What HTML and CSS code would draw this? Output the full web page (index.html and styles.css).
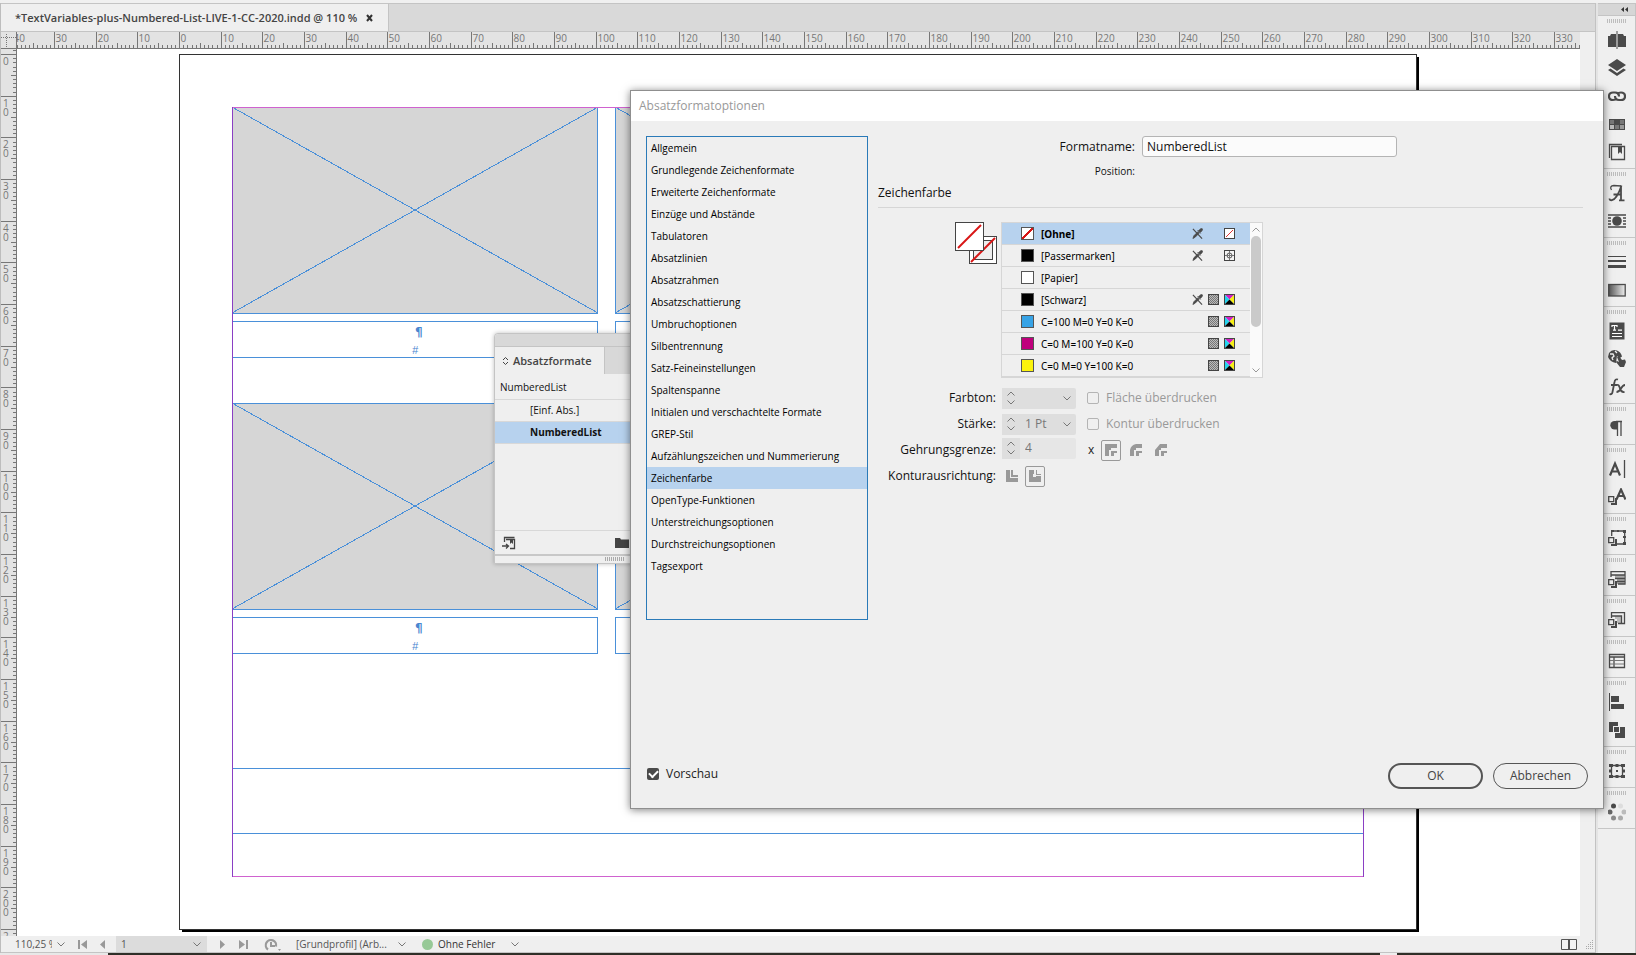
FILE: index.html
```
<!DOCTYPE html>
<html lang="de">
<head>
<meta charset="utf-8">
<title>Absatzformatoptionen</title>
<link rel="stylesheet" href="styles.css">
</head>
<body>
<svg class="defs" aria-hidden="true">
  <symbol id="chev" viewBox="0 0 8 5"><path d="M.5 .5 4 4 7.5 .5" fill="none" stroke="currentColor"/></symbol>
  <symbol id="chev-up" viewBox="0 0 8 5"><path d="M.5 4.5 4 1 7.5 4.5" fill="none" stroke="currentColor"/></symbol>
  <symbol id="pen" viewBox="0 0 12 12"><path d="M1 11.500 2 8.500 6.500 4 8 5.500 3.500 10zM7 3 8.500 1.500Q10 0 11.300 .900 12 2 10.500 3.500L9 5zM6 2.500 9.500 6" fill="#4a4a4a" stroke="#4a4a4a" stroke-width=".8"/><path d="M1 1 11 11.500" stroke="#4a4a4a" stroke-width="1.300"/></symbol>
  <symbol id="tint" viewBox="0 0 11 11"><rect x=".5" y=".5" width="10" height="10" fill="#bbb" stroke="#444"/><path d="M1 1.500h9M1 3.500h9M1 5.500h9M1 7.500h9M1 9.500h9" stroke="#777" stroke-dasharray="1 1"/><path d="M2 2.500h8M2 4.500h8M2 6.500h8M2 8.500h8" stroke="#777" stroke-dasharray="1 1"/></symbol>
  <symbol id="cmyk" viewBox="0 0 11 11"><path fill="#d21fc4" d="M0 0h11L5.500 5.500z"/><path fill="#22d3ee" d="M0 0 5.500 5.500 0 11z"/><path fill="#f7ee14" d="M11 0v11L5.500 5.500z"/><path d="M0 11 5.500 5.500 11 11z"/><rect x=".5" y=".5" width="10" height="10" fill="none" stroke="#444"/></symbol>
  <symbol id="none" viewBox="0 0 11 11"><rect x=".5" y=".5" width="10" height="10" fill="#fff" stroke="#444"/><path d="M2 9 9 2" stroke="#d33"/></symbol>
  <symbol id="reg" viewBox="0 0 11 11"><rect x=".5" y=".5" width="10" height="10" fill="#f4f4f4" stroke="#444"/><circle cx="5.500" cy="5.500" r="2.500" fill="none" stroke="#555"/><path d="M5.500 1v9M1 5.500h9" stroke="#777"/></symbol>
</svg>

<div class="top-strip"></div>
<div class="app">
  <main class="document">
    <div class="tabs">
      <div class="tab"><span>*TextVariables-plus-Numbered-List-LIVE-1-CC-2020.indd @ 110 %</span>
        <button class="tab-close" aria-label="Schließen"><svg width="7" height="8" viewBox="0 0 7 8"><path d="M1 1 6 7M6 1 1 7" stroke="#333" stroke-width="2"/></svg></button>
      </div>
    </div>
    <div class="workspace">
      <svg class="corner" width="16" height="17"><path d="M0 5.500h16M5.500 2v15" stroke="#777" stroke-dasharray="1 1"/></svg>
      <svg class="ruler-h" id="ruler-h"></svg>
      <div class="scroll-col"></div>
      <svg class="ruler-v" id="ruler-v"></svg>
      <div class="canvas">
        <svg class="page">
          <g transform="translate(-17 -49)" shape-rendering="crispEdges" fill="none">
            <rect x="182" y="57" width="1237" height="875" fill="#000"/>
            <rect x="179.500" y="54.500" width="1237" height="875" fill="#fff" stroke="#333"/>
            <g stroke="#4a90d9">
              <rect x="232.500" y="107.500" width="365" height="206" fill="#d6d6d6"/>
              <rect x="615.500" y="107.500" width="365" height="206" fill="#d6d6d6"/>
              <rect x="232.500" y="403.500" width="365" height="206" fill="#d6d6d6"/>
              <rect x="615.500" y="403.500" width="365" height="206" fill="#d6d6d6"/>
              <path d="M232 107 598 313M232 313 598 107M615 107 981 313M615 313 981 107M232 403 598 609M232 609 598 403M615 403 981 609M615 609 981 403"/>
              <rect x="232.500" y="321.500" width="365" height="36"/>
              <rect x="615.500" y="321.500" width="365" height="36"/>
              <rect x="232.500" y="617.500" width="365" height="36"/>
              <rect x="615.500" y="617.500" width="365" height="36"/>
              <path d="M232 768.500H1363M232 833.500H1363"/>
            </g>
            <path d="M232 107.500H1364M232 876.500H1364" stroke="#cf62cf"/>
            <path d="M232.500 107V877M1363.500 107V877" stroke="#8a3fc4"/>
          </g>
          <g transform="translate(-17 -49)" class="marks">
            <text x="415" y="336">¶</text><text x="412" y="354" class="hash">#</text>
            <text x="415" y="632">¶</text><text x="412" y="650" class="hash">#</text>
          </g>
        </svg>
      </div>
    </div>
    <footer class="status">
      <span class="zoom">110,25 %</span>
      <svg class="chev c1" width="8" height="5"><use href="#chev"/></svg>
      <button class="nav n1" aria-label="Erste Seite"><svg width="9" height="9"><path d="M0 0h2v9H0zM9 0v9L3 4.500z"/></svg></button>
      <button class="nav n2" aria-label="Vorherige Seite"><svg width="5" height="9"><path d="M5 0v9L0 4.500z"/></svg></button>
      <label class="page-no"><select aria-label="Seite"><option>1</option></select><svg class="chev" width="8" height="5"><use href="#chev"/></svg></label>
      <button class="nav n3" aria-label="Nächste Seite"><svg width="5" height="9"><path d="M0 0v9l5-4.500z"/></svg></button>
      <button class="nav n4" aria-label="Letzte Seite"><svg width="9" height="9"><path d="M7 0h2v9H7zM0 0v9l6-4.500z"/></svg></button>
      <button class="nav n5" aria-label="Öffnen"><svg width="17" height="13"><path d="M4 11.500A5.200 5.200 0 1 1 12 8.500" fill="none" stroke="#999" stroke-width="2.200"/><path d="M6 4h2v3h3v2H6zM14 11h3l-1.500 2z"/></svg></button>
      <span class="profile">[Grundprofil] (Arb...</span>
      <svg class="chev" width="8" height="5"><use href="#chev"/></svg>
      <span class="dot"></span>
      <span class="errors">Ohne Fehler</span>
      <svg class="chev" width="8" height="5"><use href="#chev"/></svg>
      <svg class="spread" width="16" height="11"><path d="M.5 .5h15v10H.5zM7.500 0v11M8.500 0v11" fill="#f4f4f4" stroke="#555"/></svg>
      <svg class="resize" width="9" height="9"><path d="M8.500 0v9M6.500 2v7M4.500 4v5M2.500 6v3" stroke="#aaa" stroke-dasharray="1 1"/></svg>
    </footer>
  </main>

  <aside class="dock">
    <button class="collapse" aria-label="Bedienfelder erweitern"><svg width="8" height="5"><path d="M3 0v5L0 2.500zM7 0v5L4 2.500z"/></svg></button>
    <div class="group">
      <button aria-label="Seiten"><svg viewBox="0 0 18 18"><path d="M0 5h2l1-2h5v13H0zM18 5h-2l-1-2h-5v13h8z"/><path d="M9 0v18" stroke="#4a4a4a"/></svg></button>
      <button aria-label="Ebenen"><svg viewBox="0 0 18 18"><path d="M9 0 18 6 9 12 0 6zM0 11l2.500-1.500L9 14l6.500-4.500L18 11 9 17z"/></svg></button>
      <button aria-label="Verknüpfungen"><svg viewBox="0 0 18 18"><g class="ln thick"><path d="M9 11.500Q7.500 13 5 13 1 13 1 9.200 1 5.500 5 5.500h2q4 0 4 4"/><path d="M9 7Q10.500 5.500 13 5.500q4 0 4 3.700Q17 13 13 13h-2q-4 0-4-4"/></g></svg></button>
      <button aria-label="Farbfelder"><svg viewBox="0 0 18 18"><path d="M1 4h16v11H1z"/><path fill="#777" d="M2 5h4v4H2zM12 5h4v4h-4zM7 10h4v4H7z"/><path fill="#bbb" d="M2 10h4v4H2z"/><path fill="#999" d="M12 10h4v4h-4z"/></svg></button>
      <button aria-label="Bibliothek"><svg viewBox="0 0 18 18"><path class="ln" d="M14 1.500H1.500V15M3.500 3.500h13v13h-13z"/><path d="M10 4h4v7l-2-2-2 2z"/></svg></button>
    </div>
    <div class="group">
      <button aria-label="Glyphen"><svg viewBox="0 0 18 18"><path class="ln" d="M3.500 6Q1 2 6 1.500q3 0 7 .5"/><path class="ln mid" d="M13.500 1.500Q9 15 4 16.200q-2.500 .3-2.500-1.700M13 1.500V16M5.500 10.500H13M11 16.300h5.500"/></svg></button>
      <button aria-label="Textumfluss"><svg viewBox="0 0 18 18"><path class="ln" d="M0 3h18M0 6h3M15 6h3M0 9h3M15 9h3M0 12h3M15 12h3M0 15h18"/><circle cx="9" cy="9" r="4.800"/></svg></button>
    </div>
    <div class="group">
      <button aria-label="Kontur"><svg viewBox="0 0 18 18"><path d="M0 3h18v1H0zM0 7h18v2H0zM0 12h18v3H0z"/></svg></button>
      <button aria-label="Verlauf"><svg viewBox="0 0 18 18"><defs><linearGradient id="g"><stop stop-color="#555"/><stop offset="1" stop-color="#eee"/></linearGradient></defs><rect x=".7" y="3.500" width="16.500" height="11.500" fill="url(#g)" stroke="#4a4a4a" stroke-width="1.300"/></svg></button>
    </div>
    <div class="group">
      <button aria-label="Artikel"><svg viewBox="0 0 18 18"><path d="M1.500 0.500h15v17h-15z"/><path d="M4 5V3.500h5V5M6.500 3.500V8M5 8.200h3M10 8.200h4M4 11.500h10M4 14.500h10" fill="none" stroke="#fff" stroke-width="1.200"/></svg></button>
      <button aria-label="Hyperlinks"><svg viewBox="0 0 18 18"><path d="M1 3Q4-1 9 .5q4 1.500 5 6L12 8 9 6 8 13Q2 12 0 7zM9 7l2-1 3 4 3-.5 1 2.500-2 5h-4l-4-5 1-1 2 1z"/><path d="M2 4l3 0 1 2-2 2 1 2M7 1l2 2" fill="none" stroke="#efefef" stroke-width="1.300"/></svg></button>
      <button aria-label="Effekte"><svg viewBox="0 0 18 18"><path class="ln mid" d="M10 1.500Q7 .5 6.500 4L4.500 14Q4 17 1.500 16M3 7h6M9 7q2-.5 3 3.500t4.500 3.500M17 7q-2 0-4 3.500T8.500 14"/></svg></button>
    </div>
    <div class="group">
      <button aria-label="Absatz"><svg viewBox="0 0 18 18"><path d="M9 2H6.500a4.200 4.200 0 0 0 0 8.400H9z"/><path class="ln" d="M8 2.500h6M9.500 2v15M13 2v15"/></svg></button>
    </div>
    <div class="group">
      <button aria-label="Zeichen"><svg viewBox="0 0 18 18"><path class="ln thick" d="M2 15.500 7 3.500l5 12M4 11.500h6"/><path class="ln" d="M16.500 0v18"/></svg></button>
      <button aria-label="Zeichenformate"><svg viewBox="0 0 18 18"><path class="ln thick" d="M8.500 11.500 13 1.500l4.500 10M10 8h6"/><path class="ln" d="M.7 8.700h5v5h-5z"/><path d="M7 10h2v7H3v-2h4z"/></svg></button>
    </div>
    <div class="group">
      <button aria-label="Objektformate"><svg viewBox="0 0 18 18"><path class="ln" d="M3.700 7V2h13v13H9"/><path d="M3 1h3v2H3zM9 1h2v2H9zM15 1h3v3h-3zM15 7h3v2h-3zM15 13h3v3h-3z"/><path class="ln" d="M.7 8.700h5v5h-5z"/><path d="M7 10h2v7H3v-2h4z"/></svg></button>
    </div>
    <div class="group">
      <button aria-label="Zellenformate"><svg viewBox="0 0 18 18"><path d="M7 5h9v9H9V9H7z" fill="#aaa"/><path class="ln" d="M3 7V1.700h14V5H3M7 8.500h10M9 11.500h8M17 5v9h-7"/><path class="ln" d="M.7 9.700h5v5h-5z"/><path d="M7 11h2v7H3v-2h4z"/></svg></button>
    </div>
    <div class="group">
      <button aria-label="Tabellenformate"><svg viewBox="0 0 18 18"><path d="M7 5h7v7H9V8H7z" fill="#bbb"/><path class="ln" d="M3.500 7V1.700h13V12.500H10M3.500 5h10v7"/><path class="ln" d="M.7 8.700h5v5h-5z"/><path d="M7 10h2v7H3v-2h4z"/></svg></button>
    </div>
    <div class="group">
      <button aria-label="Tabelle"><svg viewBox="0 0 18 18"><path class="ln" d="M1.500 2.500h15v13h-15zM1 5h16M6 5v11"/><path d="M2 8.500h14M2 12h14" stroke="#777"/></svg></button>
    </div>
    <div class="group">
      <button aria-label="Ausrichten"><svg viewBox="0 0 18 18"><path d="M1 0h1v18H1zM3 3h8v6H3zM3 11h13v5H3z"/></svg></button>
      <button aria-label="Pathfinder"><svg viewBox="0 0 18 18"><path d="M1 1h9v4H5v6H1zM12 6h5v11H7v-5h5zM6 6h5v5H6z"/></svg></button>
    </div>
    <div class="group">
      <button aria-label="Transformieren"><svg viewBox="0 0 18 18"><path class="ln" d="M3.500 3.500h11v11h-11z"/><path d="M1 2h4v3H1zM7.500 2h3v3h-3zM13 2h4v3h-4zM1 7.500h3v3H1zM14 7.500h3v3h-3zM1 13h4v3H1zM7.500 13h3v3h-3zM13 13h4v3h-4zM8 8h2v2H8z"/></svg></button>
    </div>
    <div class="group">
      <button aria-label="Farbe"><svg viewBox="0 0 18 18"><circle cx="5.500" cy="3" r="2.500"/><circle cx="12.500" cy="3" r="2.500" fill="#ddd"/><circle cx="16" cy="9" r="2.500" fill="#bbb"/><circle cx="12.500" cy="15" r="2.500" fill="#aaa"/><circle cx="5.500" cy="15" r="2.500" fill="#8a8a8a"/><circle cx="2" cy="9" r="2.500" fill="#666"/></svg></button>
    </div>
  </aside>
</div>
<div class="taskbar"><span></span></div>

<section class="styles-panel" aria-label="Absatzformate">
  <div class="panel-head"></div>
  <div class="panel-tabs"><div class="panel-tab"><svg width="7" height="10"><path d="M1 4 3.500 1.500 6 4M1 6 3.500 8.500 6 6" fill="none" stroke="#444"/></svg>Absatzformate</div></div>
  <div class="current">NumberedList</div>
  <ul class="style-list">
    <li>[Einf. Abs.]</li>
    <li class="selected">NumberedList</li>
  </ul>
  <div class="panel-foot">
    <svg width="14" height="14"><path d="M2.500 6V1.500h10M4 3.500h8.500v9H8M0 10h6M4 8l2.500 2L4 12.500" fill="none" stroke="#444" stroke-width="1.300"/><path d="M8 3h3v5L9.500 6.500 8 8z" fill="#444"/></svg>
    <svg width="14" height="11"><path d="M0 1h5l1 1.500h8V11H0z" fill="#444"/></svg>
  </div>
  <div class="panel-grip"></div>
</section>

<section class="dialog" role="dialog" aria-labelledby="dlg-title">
  <h1 class="dialog-title" id="dlg-title">Absatzformatoptionen</h1>
  <div class="dialog-body">
    <nav class="categories">
      <button>Allgemein</button>
      <button>Grundlegende Zeichenformate</button>
      <button>Erweiterte Zeichenformate</button>
      <button>Einzüge und Abstände</button>
      <button>Tabulatoren</button>
      <button>Absatzlinien</button>
      <button>Absatzrahmen</button>
      <button>Absatzschattierung</button>
      <button>Umbruchoptionen</button>
      <button>Silbentrennung</button>
      <button>Satz-Feineinstellungen</button>
      <button>Spaltenspanne</button>
      <button>Initialen und verschachtelte Formate</button>
      <button>GREP-Stil</button>
      <button>Aufzählungszeichen und Nummerierung</button>
      <button class="selected">Zeichenfarbe</button>
      <button>OpenType-Funktionen</button>
      <button>Unterstreichungsoptionen</button>
      <button>Durchstreichungsoptionen</button>
      <button>Tagsexport</button>
    </nav>
    <div class="options">
      <div class="name-row"><label for="fname">Formatname:</label><input id="fname" value="NumberedList"></div>
      <div class="position">Position:</div>
      <h2>Zeichenfarbe</h2>
      <div class="colour">
        <svg class="fill-stroke" width="43" height="44"><rect x="14.500" y="14.500" width="27" height="27" fill="#fff" stroke="#444"/><rect x="18.500" y="18.500" width="19" height="19" fill="#eee" stroke="#444"/><path d="M16 40 40 16" stroke="#d81616" stroke-width="2"/><rect x=".5" y=".5" width="28" height="28" fill="#fff" stroke="#444"/><path d="M3 26 26 3" stroke="#d81616" stroke-width="2"/></svg>
        <div class="swatches">
          <ul>
            <li class="selected"><span class="chip none"></span><b>[Ohne]</b><svg><use href="#pen"/></svg><i></i><svg><use href="#none"/></svg></li>
            <li><span class="chip black"></span><b>[Passermarken]</b><svg><use href="#pen"/></svg><i></i><svg><use href="#reg"/></svg></li>
            <li><span class="chip paper"></span><b>[Papier]</b></li>
            <li><span class="chip black"></span><b>[Schwarz]</b><svg><use href="#pen"/></svg><svg><use href="#tint"/></svg><svg><use href="#cmyk"/></svg></li>
            <li><span class="chip cyan"></span><b>C=100 M=0 Y=0 K=0</b><svg><use href="#tint"/></svg><svg><use href="#cmyk"/></svg></li>
            <li><span class="chip magenta"></span><b>C=0 M=100 Y=0 K=0</b><svg><use href="#tint"/></svg><svg><use href="#cmyk"/></svg></li>
            <li><span class="chip yellow"></span><b>C=0 M=0 Y=100 K=0</b><svg><use href="#tint"/></svg><svg><use href="#cmyk"/></svg></li>
          </ul>
          <div class="scrollbar"><svg width="8" height="5"><use href="#chev-up"/></svg><span class="thumb"></span><svg width="8" height="5"><use href="#chev"/></svg></div>
        </div>
      </div>
      <div class="form">
        <label for="tint-f">Farbton:</label>
        <div class="cell">
          <div class="field"><span class="spin"><svg><use href="#chev-up"/></svg><svg><use href="#chev"/></svg></span><select id="tint-f" disabled><option></option></select><svg class="drop"><use href="#chev"/></svg></div>
          <label class="check"><input type="checkbox" disabled>Fläche überdrucken</label>
        </div>
        <label for="weight">Stärke:</label>
        <div class="cell">
          <div class="field"><span class="spin"><svg><use href="#chev-up"/></svg><svg><use href="#chev"/></svg></span><select id="weight" disabled><option>1 Pt</option></select><svg class="drop"><use href="#chev"/></svg></div>
          <label class="check"><input type="checkbox" disabled>Kontur überdrucken</label>
        </div>
        <label for="miter">Gehrungsgrenze:</label>
        <div class="cell miter">
          <div class="field plain"><span class="spin"><svg><use href="#chev-up"/></svg><svg><use href="#chev"/></svg></span><input id="miter" value="4" disabled></div>
          <span class="times">x</span>
          <button class="tool on" aria-label="Gehrungsecke"><svg width="12" height="12"><path d="M0 0h12v4H6v2H4v6H0z"/><path d="M6 7h6v2H9v3H6z"/></svg></button>
          <button class="tool" aria-label="Abgerundete Ecke"><svg width="12" height="12"><path d="M0 12V6Q1 1 6 0h6v4H6v2H4v6z"/><path d="M6 7h6v2H9v3H6z"/></svg></button>
          <button class="tool" aria-label="Abgeflachte Ecke"><svg width="12" height="12"><path d="M0 12V6L5 0h7v4H6v2H4v6z"/><path d="M6 7h6v2H9v3H6z"/></svg></button>
        </div>
        <span>Konturausrichtung:</span>
        <div class="cell tight">
          <button class="tool" aria-label="Kontur mittig"><svg width="12" height="12"><path d="M0 0h4v8h8v4H0zM5 0h2v5h5v2H5z"/></svg></button>
          <button class="tool on" aria-label="Kontur außen"><svg width="12" height="12"><path d="M0 0h5v4H4v3h3V6h5v6H0zM7 0h1v4h4v1H7z"/></svg></button>
        </div>
      </div>
    </div>
  </div>
  <div class="dialog-foot">
    <label class="preview"><input type="checkbox" checked>Vorschau</label>
    <button class="pill primary">OK</button>
    <button class="pill">Abbrechen</button>
  </div>
</section>
<script src="rulers.js"></script>
</body>
</html>
```
FILE: styles.css
```
* { box-sizing: border-box; }
body { margin: 0; height: 100vh; display: flex; flex-direction: column; overflow: hidden; background: #efefef; color: #111; font: 12px/16px "Open Sans", "Noto Sans", sans-serif; }
button, input, select { font: inherit; color: inherit; margin: 0; padding: 0; border: 0; background: none; border-radius: 0; appearance: none; }
select:disabled, input:disabled { opacity: 1; }
ul { margin: 0; padding: 0; list-style: none; }
.defs { position: absolute; width: 0; height: 0; }
svg { display: block; flex: none; }

.top-strip { flex: none; height: 3px; background: #f0f0f0; }
.app { flex: 1; min-height: 0; display: flex; }
.document { flex: 1; min-width: 0; display: flex; flex-direction: column; border-left: 1px solid #bdbdbd; border-right: 1px solid #c2c2c2; }
.tabs { flex: none; height: 29px; display: flex; background: #d9d9d9; border-top: 1px solid #c4c4c4; border-bottom: 1px solid #c4c4c4; }
.tab { display: flex; align-items: center; gap: 9px; padding: 0 15px 0 14px; background: #efefef; border-right: 1px solid #c4c4c4; font-size: 11px; font-weight: 600; color: #444; white-space: nowrap; }
.workspace { flex: 1; min-height: 0; display: grid; grid-template: 17px minmax(0, 1fr) / 16px minmax(0, 1fr) 15px; }
.corner { background: #e3e3e3; border-right: 1px solid #777; border-bottom: 1px solid #777; }
.ruler-h, .ruler-v { width: 100%; height: 100%; background: #e3e3e3; fill: #777; font-size: 10px; }
.ruler-h { border-bottom: 1px solid #777; }
.ruler-v { border-right: 1px solid #777; }
.ruler-h path, .ruler-v path { stroke: #777; shape-rendering: crispEdges; }
.scroll-col { grid-column: 3; grid-row: 1 / 3; background: #efefef; }
.canvas { background: #fff; overflow: hidden; }
.page { width: 100%; height: 100%; }
.marks { fill: #4a86d0; font: 700 12px "DejaVu Sans", sans-serif; }
.marks .hash { font: italic 11px "Liberation Sans", sans-serif; }

.status { flex: none; height: 17px; display: flex; align-items: center; background: #efefef; border-bottom: 1px solid #c4c4c4; font-size: 10px; color: #555; padding: 0 2px 0 14px; white-space: nowrap; }
.zoom { width: 37px; overflow: hidden; }
.chev { color: #777; }
.c1 { margin-left: 5px; }
.nav { fill: #999; }
.n1 { margin-left: 13px; }
.n2 { margin-left: 13px; }
.page-no { width: 91px; height: 16px; margin-left: 11px; padding: 0 6px 0 5px; display: flex; align-items: center; background: #dcdcdc; }
.page-no select { flex: 1; }
.n3 { margin-left: 13px; }
.n4 { margin-left: 14px; }
.n5 { margin: 0 15px 0 16px; }
.profile { width: 102px; }
.dot { width: 11px; height: 11px; margin: 0 5px 0 16px; border-radius: 50%; background: #97c997; }
.errors { width: 73px; color: #333; }
.spread { margin-left: auto; }
.resize { margin-left: 7px; }

.dock { flex: none; width: 40px; display: flex; flex-direction: column; border-left: 2px solid #e4e4e4; border-right: 1px solid #c4c4c4; background: #efefef; }
.collapse { height: 13px; display: flex; justify-content: flex-end; align-items: center; padding-right: 6px; background: #d6d6d6; border-top: 1px solid #c4c4c4; border-bottom: 1px solid #c4c4c4; fill: #333; }
.group { display: flex; flex-direction: column; padding: 10px 0 2px; border-bottom: 1px solid #c6c6c6; background: repeating-linear-gradient(90deg, #bdbdbd 0 1px, transparent 1px 2px) 9px 3px / 19px 4px no-repeat; }
.group button { height: 28px; display: grid; place-items: center; fill: #4a4a4a; }
.group svg { width: 18px; height: 18px; }
.ln { fill: none; stroke: #4a4a4a; stroke-width: 1.3; }
.ln.mid { stroke-width: 1.8; }
.ln.thick { stroke-width: 2.2; }
.taskbar { flex: none; height: 2px; background: #2f2f28; display: flex; }
.taskbar::before { content: ""; width: 108px; background: #e8e8e8; }
.taskbar span { width: 17px; margin-left: auto; margin-right: 239px; background: #eee; }

.styles-panel { position: absolute; left: 494px; top: 333px; width: 200px; background: #efefef; border: 1px solid #c4c4c4; border-radius: 4px 0 0 0; box-shadow: 0 0 4px rgba(0,0,0,.25); font-size: 10px; }
.panel-head { height: 13px; background: #d8d8d8; border-radius: 4px 0 0 0; border-bottom: 1px solid #c4c4c4; }
.panel-tabs { height: 27px; background: #d8d8d8; display: flex; }
.panel-tab { display: flex; align-items: center; gap: 4px; padding: 0 13px 0 7px; background: #efefef; font-weight: 600; font-size: 11px; color: #444; border-right: 1px solid #c4c4c4; }
.current { height: 25px; padding-left: 5px; line-height: 26px; }
.style-list { height: 132px; border-top: 1px solid #d8d8d8; border-bottom: 1px solid #d8d8d8; }
.style-list li { height: 22px; padding-left: 35px; line-height: 21px; border-bottom: 1px solid #d8d8d8; }
.style-list .selected { background: #b7d2ee; font-weight: 700; }
.panel-foot { height: 25px; display: flex; align-items: center; gap: 99px; padding-left: 7px; border-bottom: 2px solid #c8c8c8; }
.panel-grip { height: 7px; background: repeating-linear-gradient(90deg, #aaa 0 1px, transparent 1px 2px) 110px 1px / 19px 4px no-repeat; }

.dialog { position: absolute; left: 630px; right: 32px; top: 90px; bottom: 146px; display: flex; flex-direction: column; background: #efefef; border: 1px solid #8f8f8f; box-shadow: 0 1px 8px rgba(0,0,0,.5); }
.dialog-title { margin: 0; height: 30px; padding-left: 8px; background: #fff; color: #999; font-size: 12px; font-weight: 400; line-height: 30px; }
.dialog-body { display: grid; grid-template-columns: 222px minmax(0, 1fr); gap: 10px; padding: 15px 20px 0 15px; }
.categories { min-height: 484px; display: flex; flex-direction: column; border: 1px solid #2a7ab8; font-size: 10px; }
.categories button { height: 22px; padding: 0 0 1px 4px; text-align: left; color: #000; }
.selected { background: #b7d2ee; }
.name-row { display: grid; grid-template-columns: 257px 255px; gap: 7px; align-items: center; }
.name-row label { text-align: right; }
.name-row input { height: 21px; padding: 0 4px; background: #fbfbfb; border: 1px solid #b4b4b4; border-radius: 3px; }
.position { width: 257px; margin-top: 4px; line-height: 20px; font-size: 10px; text-align: right; }
.options h2 { margin: 1px 0 0; height: 26px; line-height: 22px; font-size: 12px; font-weight: 400; border-bottom: 1px solid #d6d6d6; }
.colour { display: flex; align-items: flex-start; gap: 3px; margin-top: 14px; padding-left: 77px; }
.swatches { width: 262px; height: 156px; display: flex; border: 1px solid #d6d6d6; overflow: hidden; font-family: "Noto Sans", sans-serif; font-size: 10px; }
.swatches ul { flex: 1; }
.swatches li { height: 22px; display: flex; align-items: center; gap: 5px; padding: 0 15px 0 19px; border-bottom: 1px solid #d6d6d6; }
.swatches b { flex: 1; margin-left: 2px; font-weight: 400; color: #000; }
.swatches .selected b { font-weight: 700; }
.swatches li svg, .swatches i { width: 11px; height: 11px; }
.chip { width: 13px; height: 13px; border: 1px solid #555; background: #fff; }
.chip.none { background: linear-gradient(135deg, #fff 42%, #d81616 43% 57%, #fff 58%); }
.chip.black { background: #000; }
.chip.cyan { background: #37a3e6; }
.chip.magenta { background: #bf007c; }
.chip.yellow { background: #fbf30c; }
.scrollbar { width: 12px; display: flex; flex-direction: column; align-items: center; gap: 4px; padding: 4px 0; background: #fafafa; color: #999; }
.thumb { width: 10px; height: 91px; border-radius: 5px; background: #cacaca; }
.scrollbar svg:last-child { margin-top: auto; }
.form { display: grid; grid-template-columns: 118px 1fr; grid-auto-rows: 26px; align-items: center; column-gap: 6px; margin-top: 7px; }
.form > label, .form > span { text-align: right; }
.cell { display: flex; align-items: center; gap: 4px; }
.cell.miter { gap: 5px; }
.cell.tight { gap: 3px; }
.field { width: 74px; height: 21px; display: flex; align-items: center; margin-right: 7px; background: #dedede; color: #777; border-radius: 2px; }
.field.plain { margin-bottom: 4px; background: #e6e6e6; }
.spin { width: 18px; height: 21px; display: flex; flex-direction: column; align-items: center; justify-content: center; gap: 4px; background: #dedede; }
.field svg { width: 8px; height: 5px; }
.field select, .field input { flex: 1; min-width: 0; padding-left: 5px; }
.field .drop { margin-right: 5px; }
.check { display: flex; align-items: center; gap: 7px; color: #999; }
.check input { width: 12px; height: 12px; border: 1px solid #b4b4b4; border-radius: 2px; }
.times { width: 8px; color: #222; }
.tool { width: 20px; height: 21px; display: grid; place-items: center; border-radius: 2px; fill: #999; }
.tool.on { border: 1px solid #999; }
.dialog-foot { margin-top: auto; display: flex; align-items: center; gap: 10px; padding: 0 15px 19px 16px; }
.preview { display: flex; align-items: center; gap: 7px; margin: 0 auto 4px 0; color: #222; }
.preview input { width: 12px; height: 12px; border-radius: 2px; background: #4a4a4a; display: grid; place-items: center; }
.preview input::after { content: ""; width: 7px; height: 4px; border: solid #fff; border-width: 0 0 2px 2px; transform: translateY(-1px) rotate(-45deg); }
.pill { width: 95px; height: 26px; border: 1px solid #555; border-radius: 13px; color: #444; }
.pill.primary { border-width: 2px; }
```
FILE: rulers.js
```
const UNIT = 125 / 30; // pixels per millimetre
const NS = 'http://www.w3.org/2000/svg';

function label(svg, x, y, text) {
  const t = document.createElementNS(NS, 'text');
  t.setAttribute('x', x);
  t.setAttribute('y', y);
  t.textContent = text;
  svg.append(t);
}

function draw(id, origin, from, to, vertical) {
  const svg = document.getElementById(id);
  let d = '';
  for (let mm = from; mm <= to; mm++) {
    const p = Math.round(origin + mm * UNIT) + 0.5;
    const len = mm % 10 === 0 ? 16 : mm % 5 === 0 ? 5 : 3;
    d += vertical ? `M${15 - len} ${p}H15` : `M${p} ${16 - len}V16`;
    if (mm % 10 === 0) {
      const s = String(Math.abs(mm));
      if (vertical) [...s].forEach((c, i) => label(svg, 2, p + 10 + i * 9, c));
      else label(svg, p + 1, 10, s);
    }
  }
  const path = document.createElementNS(NS, 'path');
  path.setAttribute('d', d);
  svg.append(path);
}

draw('ruler-h', 162, -40, 345, false);
draw('ruler-v', 5, -1, 215, true);
```
